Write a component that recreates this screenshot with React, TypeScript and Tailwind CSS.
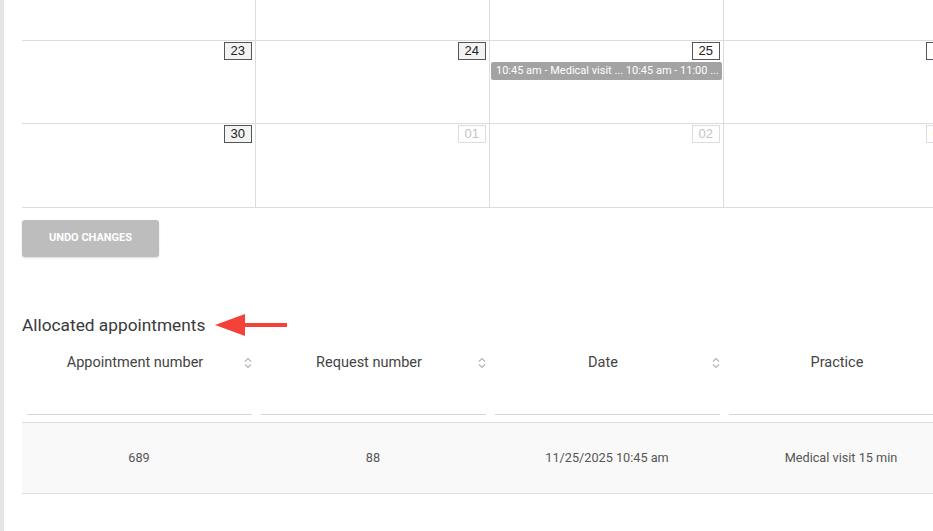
import React from "react"

type DayCell = { day?: string; muted?: boolean; today?: boolean; event?: string }

const rows: DayCell[][] = [
  [{}, {}, {}, {}],
  [
    { day: "23" },
    { day: "24" },
    { day: "25", today: true, event: "10:45 am - Medical visit ... 10:45 am - 11:00 ..." },
    { day: "26", today: true },
  ],
  [
    { day: "30" },
    { day: "01", muted: true },
    { day: "02", muted: true },
    { day: "03", muted: true },
  ],
]

const rowHeights = ["h-[41px]", "h-[83px]", "h-[84px]"]

const columns = ["Appointment number", "Request number", "Date", "Practice"]
const data = ["689", "88", "11/25/2025 10:45 am", "Medical visit 15 min"]

function SortIcon() {
  return (
    <svg width="8" height="12" viewBox="0 0 8 12" fill="none" stroke="#b5b5b5" strokeWidth="1.2">
      <path d="M1 4.5 L4 1.5 L7 4.5" />
      <path d="M1 7.5 L4 10.5 L7 7.5" />
    </svg>
  )
}

function DayBadge({ cell }: { cell: DayCell }) {
  if (!cell.day) return null
  const cls = cell.muted
    ? "border-[#dcdcdc] text-[#c4c4c4] bg-white"
    : cell.today
      ? "border-[#555] text-[#222] bg-white"
      : "border-[#555] text-[#222] bg-[#f3f3f3]"
  return (
    <div
      className={`ml-auto mr-[3px] mt-px h-[18px] px-[6px] border leading-[16px] text-[13px] font-['Liberation_Sans',Arial,sans-serif] ${cls}`}
    >
      {cell.day}
    </div>
  )
}

export default function App() {
  return (
    <div className="flex min-h-[531px] w-[933px] overflow-hidden bg-white font-['Roboto',sans-serif]">
      <div className="w-[4px] shrink-0 bg-[#e4e4e4]" />
      <div className="flex-1 overflow-hidden pl-[18px]">
        {/* calendar */}
        <div className="w-[936px]">
          {rows.map((row, r) => (
            <div
              key={r}
              className={`grid grid-cols-[repeat(4,234px)] border-b border-[#dcdcdc] ${rowHeights[r]}`}
            >
              {row.map((cell, c) => (
                <div key={c} className="flex flex-col border-r border-[#dcdcdc]">
                  <DayBadge cell={cell} />
                  {cell.event && (
                    <div className="mx-px mt-[2px] h-[18px] overflow-hidden whitespace-nowrap rounded-[2px] bg-[#a3a3a3] px-[5px] text-[11px] leading-[18px] text-white">
                      {cell.event}
                    </div>
                  )}
                </div>
              ))}
            </div>
          ))}
        </div>

        <button className="mt-[12px] h-[37px] w-[137px] rounded-[3px] bg-[#bdbdbd] text-[11px] font-bold uppercase text-white shadow-[0_1px_2px_rgba(0,0,0,0.15)]">
          Undo changes
        </button>

        <div className="mt-[57px] flex h-[22px] items-center">
          <h2 className="text-[17.3px] leading-[22px] text-[#3a3a3a]">Allocated appointments</h2>
          <svg className="ml-[10px]" width="72" height="24" viewBox="0 0 72 24">
            <polygon points="0,12 30,1 30,23" fill="#f4423a" />
            <rect x="28" y="10" width="44" height="4" fill="#f4423a" />
          </svg>
        </div>

        {/* table */}
        <div className="mt-[7px] w-[936px]">
          <div className="grid grid-cols-[repeat(4,234px)]">
            {columns.map((col, i) => (
              <div key={col} className="flex flex-col">
                <div className="relative flex h-[40px] items-center justify-center pr-[8px] text-[14.5px] text-[#444]">
                  {col}
                  {i < 3 && (
                    <span className="absolute right-[4px] top-[14px]">
                      <SortIcon />
                    </span>
                  )}
                </div>
                <div className="ml-[5px] mr-[4px] h-[32px] border-b border-[#d6d6d6]" />
              </div>
            ))}
          </div>
          <div className="mt-[7px] grid h-[72px] grid-cols-[repeat(4,234px)] border-y border-[#dedede] bg-[#f9f9f9]">
            {data.map((d, i) => (
              <div key={i} className="flex items-center justify-center text-[12.7px] text-[#555]">
                {d}
              </div>
            ))}
          </div>
        </div>
      </div>
    </div>
  )
}
